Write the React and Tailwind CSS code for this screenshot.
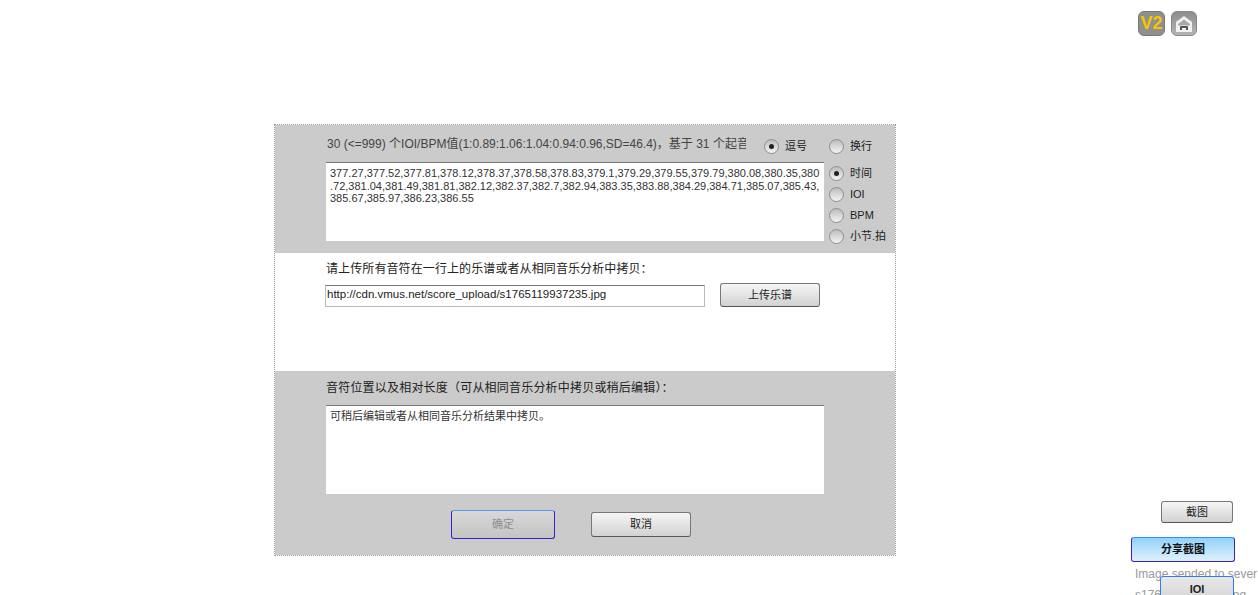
const sans = 'font-["Liberation_Sans","Noto_Sans_CJK_SC",sans-serif]';

// wrapped by hand: the line break in the picture falls before a "."
const times = [
  '377.27,377.52,377.81,378.12,378.37,378.58,378.83,379.1,379.29,379.55,379.79,380.08,380.35,380',
  '.72,381.04,381.49,381.81,382.12,382.37,382.7,382.94,383.35,383.88,384.29,384.71,385.07,385.43,',
  '385.67,385.97,386.23,386.55',
];

function Radio({ label, checked }) {
  return (
    <div className="flex items-center h-[21px]">
      <span className="w-[15px] h-[15px] rounded-full border border-[#8f8f8f] bg-gradient-to-b from-[#bdbdbd] to-[#f4f4f4] flex items-center justify-center shrink-0">
        {checked && <span className="w-[5px] h-[5px] rounded-full bg-[#222]" />}
      </span>
      <span className="ml-[6px] text-[11px] text-[#222] whitespace-nowrap">{label}</span>
    </div>
  );
}

function FlashButton({ children, className }) {
  return (
    <button
      className={`flex items-center justify-center rounded-[3px] border border-[#777] border-b-[#555] bg-gradient-to-b from-[#f6f6f6] to-[#d2d2d2] text-[11px] text-[#222] ${className}`}
    >
      {children}
    </button>
  );
}

export default function App() {
  return (
    <div className={`relative h-[595px] w-[1258px] overflow-hidden bg-white ${sans}`}>
      <div className="flex justify-end gap-[6px] pt-[11px] pr-[61px] h-[37px]">
        <div className="w-[27px] h-[25px] rounded-[6px] bg-[#8f8f8f] border border-[#777] flex items-center justify-center text-[18px] font-bold text-[#f8c400]">
          V2
        </div>
        <div className="w-[26px] h-[25px] rounded-[6px] bg-gradient-to-b from-[#8e8e8e] to-[#b5b5b5] border border-[#888] flex items-center justify-center">
          <svg width="20" height="20" viewBox="0 0 20 20">
            <path d="M10 2 L18 8 V18 H2 V8 Z" fill="#f1f1f1" />
            <path d="M4 10 L10 5.5 L16 10 V11.5 H4 Z" fill="#a9a9a9" />
            <path d="M6 16 V13 Q6 12 7 12 H13 Q14 12 14 13 V16 H12 V14 H8 V16 Z" fill="#555" />
          </svg>
        </div>
      </div>

      <div className="ml-[274px] mt-[87px] w-[622px] h-[432px] border border-dotted border-[#999] flex flex-col text-[12px]">
        <section className="h-[128px] bg-[#cbcbcb] pt-[11px]">
          <div className="flex h-[16px]">
            <div className="ml-[52px] h-[16px] w-[419px] overflow-hidden whitespace-nowrap leading-[16px] text-[#444]">
              30 (&lt;=999) 个IOI/BPM值(1:0.89:1.06:1.04:0.94:0.96,SD=46.4)，基于 31 个起音
            </div>
            <div className="ml-[18px] w-[65px]">
              <Radio label="逗号" checked />
            </div>
            <Radio label="换行" />
          </div>
          <div className="flex mt-[10px]">
            <div className="ml-[51px] w-[498px] h-[79px] bg-white border-t border-[#777] pl-[4px] pt-[4px] text-[11px] leading-[12.5px] text-[#333] whitespace-nowrap">
              {times.map((line) => (
                <div key={line}>{line}</div>
              ))}
            </div>
            <div className="ml-[5px] mt-[1px]">
              <Radio label="时间" checked />
              <Radio label="IOI" />
              <Radio label="BPM" />
              <Radio label="小节.拍" />
            </div>
          </div>
        </section>

        <section className="h-[118px] bg-white pl-[50px] pt-[7px]">
          <div className="ml-[1px] h-[18px] leading-[18px] text-[12px] tracking-[0.1px] text-[#222]">请上传所有音符在一行上的乐谱或者从相同音乐分析中拷贝：</div>
          <div className="flex items-end mt-[5px]">
            <div className="w-[380px] h-[22px] bg-white border border-[#bbb] border-t-[#777] pl-[1px] text-[11.5px] leading-[16px] text-[#222]">
              http://cdn.vmus.net/score_upload/s1765119937235.jpg
            </div>
            <FlashButton className="ml-[15px] w-[100px] h-[24px]">上传乐谱</FlashButton>
          </div>
        </section>

        <section className="flex-1 bg-[#cbcbcb] pl-[51px] pt-[8px]">
          <div className="h-[18px] leading-[18px] text-[12px] tracking-[0.2px] text-[#222]">音符位置以及相对长度（可从相同音乐分析中拷贝或稍后编辑）：</div>
          <div className="mt-[8px] w-[498px] h-[89px] bg-white border-t border-[#777] px-[4px] pt-[4px] text-[11px] leading-[13px] text-[#333]">
            可稍后编辑或者从相同音乐分析结果中拷贝。
          </div>
          <div className="flex mt-[16px] ml-[125px] gap-[36px]">
            <button className="w-[104px] h-[29px] rounded-[3px] border border-[#3a1fd0] border-t-[#4a9cf0] bg-gradient-to-b from-[#d8d8d8] to-[#c4c4c4] text-[11px] text-[#8f8f8f]">
              确定
            </button>
            <FlashButton className="w-[100px] h-[25px] mt-[2px]">取消</FlashButton>
          </div>
        </section>
      </div>

      {/* right side tools */}
      <div className="absolute left-[1131px] top-[501px] w-[127px]">
        <FlashButton className="ml-[30px] w-[72px] h-[22px]">截图</FlashButton>
        <button className="mt-[14px] w-[104px] h-[25px] rounded-[3px] border border-[#3a1fd0] border-t-[#2f8df5] bg-gradient-to-b from-[#8fd2fb] to-[#dff1fc] text-[11px] font-bold text-[#111]">
          分享截图
        </button>
        <div className="mt-[4px] ml-[4px] text-[12px] leading-[16px] whitespace-nowrap text-[#999]">
          Image sended to sever
          <div className="mt-[5px]">s1765119937235.jpg</div>
        </div>
      </div>
      <button className="absolute left-[1160px] top-[576px] w-[74px] h-[30px] rounded-[3px] border border-[#2f7df5] bg-gradient-to-b from-[#e8e8e8] to-[#d2d2d2] pb-[3px] text-[11px] font-bold text-[#222]">
        IOI
      </button>
    </div>
  );
}
